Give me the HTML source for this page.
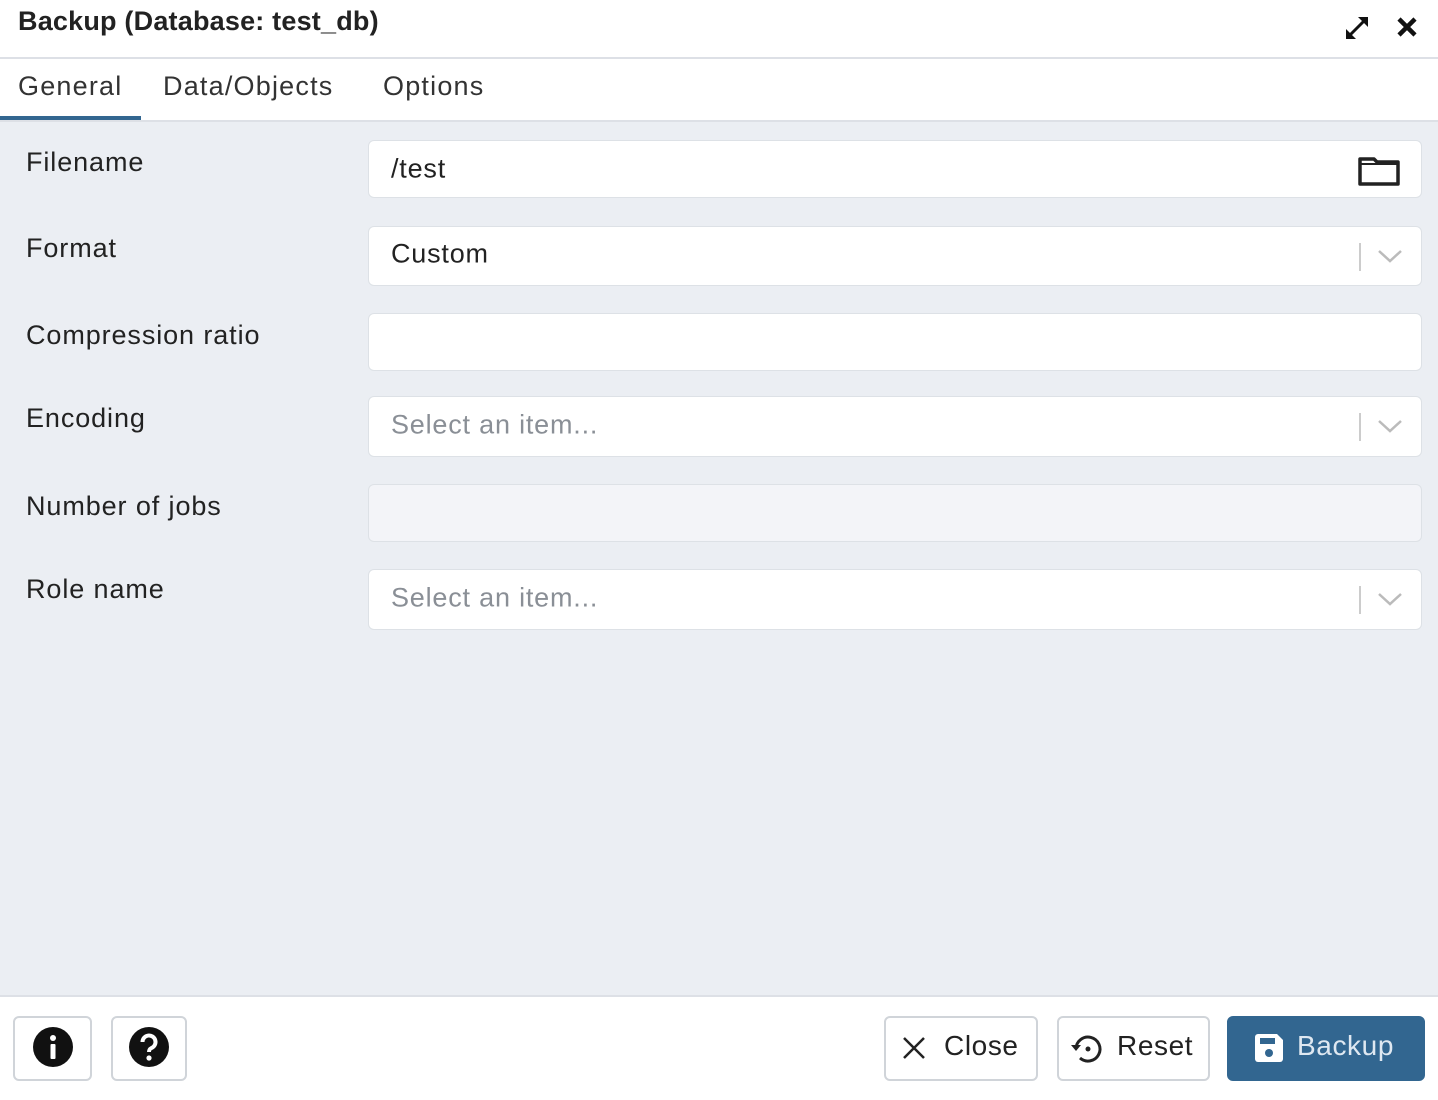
<!DOCTYPE html>
<html><head><meta charset="utf-8"><style>
*{box-sizing:border-box;margin:0;padding:0}
body{width:1438px;height:1100px;overflow:hidden;background:#ebeef3;font-family:"Liberation Sans",sans-serif;color:#222;position:relative}
.hdr{position:absolute;left:0;top:0;width:1438px;height:59px;background:#fff;border-bottom:2px solid #dde0e6}
.title{position:absolute;left:18px;top:6px;font-size:27px;font-weight:bold;color:#222;letter-spacing:.2px}
.tabs{position:absolute;left:0;top:59px;width:1438px;height:63px;background:#fff;border-bottom:2px solid #dde0e6}
.tab{position:absolute;top:12px;font-size:27px;color:#333;letter-spacing:1.2px}
.ul{position:absolute;left:0;top:57px;width:141px;height:4px;background:#326690}
.lbl{position:absolute;left:26px;font-size:27px;color:#222;letter-spacing:.9px}
.fld{position:absolute;left:368px;width:1054px;background:#fff;border:1px solid #dde1e6;border-radius:6px;font-size:27px;letter-spacing:.8px}
.fld span{position:absolute;left:22px;top:50%;transform:translateY(-50%)}
.ph{color:#8a8f96}
.sel:after{content:"";position:absolute;right:60px;top:16px;width:2px;height:28px;background:#ccc}
.chev{position:absolute;right:18px;top:20px}
.ftr{position:absolute;left:0;top:995px;width:1438px;height:105px;background:#fff;border-top:2px solid #dde0e6}
.btn{position:absolute;top:19px;height:65px;border:2px solid #d0d4d9;border-radius:6px;background:#fff;font-size:28px;color:#222;letter-spacing:.6px}
</style></head><body>
<div class="hdr"><div class="title">Backup (Database: test_db)</div>
<svg style="position:absolute;left:1343px;top:14px" width="28" height="28" viewBox="0 0 28 28"><path d="M4 24L24 4" stroke="#111" stroke-width="3"/><path d="M15 3h10v10zM3 15v10h10z" fill="#111"/></svg>
<svg style="position:absolute;left:1396px;top:16px" width="22" height="22" viewBox="0 0 22 22"><path d="M3 3L19 19M19 3L3 19" stroke="#111" stroke-width="4.5"/></svg>
</div>
<div class="tabs">
<div class="tab" style="left:18px">General</div>
<div class="tab" style="left:163px">Data/Objects</div>
<div class="tab" style="left:383px">Options</div>
<div class="ul"></div></div>

<div class="lbl" style="top:147px">Filename</div>
<div class="fld" style="top:140px;height:58px"><span>/test</span>
<svg style="position:absolute;right:20px;top:14px" width="44" height="32" viewBox="0 0 44 32"><path d="M3 4h14l3 3h21v22H3z" fill="none" stroke="#222" stroke-width="3.5" stroke-linejoin="round"/><path d="M3 9h38" stroke="#222" stroke-width="2"/></svg></div>

<div class="lbl" style="top:233px">Format</div>
<div class="fld sel" style="top:226px;height:60px"><span style="margin-top:-2px">Custom</span><svg class="chev" width="26" height="18"><path d="M2 4l11 10 11-10" fill="none" stroke="#bbb" stroke-width="2.5"/></svg></div>

<div class="lbl" style="top:320px">Compression ratio</div>
<div class="fld" style="top:313px;height:58px"></div>

<div class="lbl" style="top:403px">Encoding</div>
<div class="fld sel" style="top:396px;height:61px"><span class="ph" style="margin-top:-2px">Select an item...</span><svg class="chev" width="26" height="18"><path d="M2 4l11 10 11-10" fill="none" stroke="#bbb" stroke-width="2.5"/></svg></div>

<div class="lbl" style="top:491px">Number of jobs</div>
<div class="fld" style="top:484px;height:58px;background:#f3f4f8"></div>

<div class="lbl" style="top:574px">Role name</div>
<div class="fld sel" style="top:569px;height:61px"><span class="ph" style="margin-top:-2px">Select an item...</span><svg class="chev" width="26" height="18"><path d="M2 4l11 10 11-10" fill="none" stroke="#bbb" stroke-width="2.5"/></svg></div>

<div class="ftr">
<div class="btn" style="left:13px;width:79px"><svg style="position:absolute;left:18px;top:9px" width="40" height="40" viewBox="0 0 40 40"><circle cx="20" cy="20" r="20" fill="#111"/><circle cx="20" cy="11" r="3" fill="#fff"/><rect x="17.5" y="17" width="5" height="15" rx="1" fill="#fff"/></svg></div>
<div class="btn" style="left:111px;width:76px"><svg style="position:absolute;left:16px;top:9px" width="40" height="40" viewBox="0 0 40 40"><circle cx="20" cy="20" r="20" fill="#111"/><path d="M13.5 15a6.5 6.5 0 1 1 9 6c-2 1-2.5 2-2.5 4" fill="none" stroke="#fff" stroke-width="4"/><circle cx="20" cy="31" r="2.6" fill="#fff"/></svg></div>
<div class="btn" style="left:884px;width:154px"><svg style="position:absolute;left:16px;top:18px" width="24" height="24"><path d="M2 2L22 22M22 2L2 22" stroke="#222" stroke-width="2.5"/></svg><span style="position:absolute;left:58px;top:12px">Close</span></div>
<div class="btn" style="left:1057px;width:153px"><svg style="position:absolute;left:10px;top:14px" width="36" height="34" viewBox="0 0 36 34"><path d="M7 17a12 12 0 1 1 4 9" fill="none" stroke="#222" stroke-width="3"/><path d="M2 13l5 6 5-6z" fill="#222"/><circle cx="19" cy="17" r="2.5" fill="#222"/></svg><span style="position:absolute;left:58px;top:12px">Reset</span></div>
<div class="btn" style="left:1227px;width:198px;background:#326690;border-color:#326690;color:#dfe8f1"><svg style="position:absolute;left:24px;top:14px" width="32" height="32" viewBox="0 0 32 32"><path d="M2 5a3 3 0 0 1 3-3h19l6 6v19a3 3 0 0 1-3 3H5a3 3 0 0 1-3-3z" fill="#fff"/><rect x="7" y="6" width="15" height="6" fill="#326690"/><circle cx="16" cy="21" r="4" fill="#326690"/></svg><span style="position:absolute;left:68px;top:12px">Backup</span></div>
</div>
</body></html>
